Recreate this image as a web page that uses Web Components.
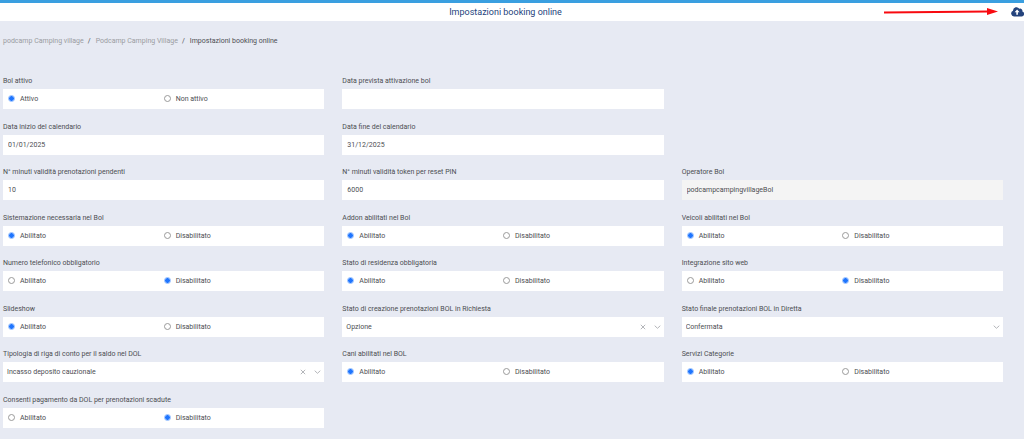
<!DOCTYPE html>
<html lang="it">
<head>
<meta charset="utf-8">
<meta name="viewport" content="width=device-width, initial-scale=1">
<title>Impostazioni booking online</title>
<style>
body {
    margin: 0;
    --page-bg: #e7eaf3;
    --accent: #3a9fe0;
    --brand: #24437c;
    --text-color: #4c4e52;
    --muted: #9a9ca1;
    background: var(--page-bg);
    color: var(--text-color);
    font-family: Roboto, "Liberation Sans", sans-serif;
    font-size: 7px;
}
</style>
</head>
<body>
<settings-page>
    <page-header slot="header" icon-label="Salva">Impostazioni booking online</page-header>
    <bread-crumb slot="path"></bread-crumb>
    <radio-field label="Bol attivo" on="Attivo" off="Non attivo" value="on"></radio-field>
    <text-field label="Data prevista attivazione bol"></text-field>
    <text-field label="Data inizio del calendario" value="01/01/2025" class="row-start"></text-field>
    <text-field label="Data fine del calendario" value="31/12/2025"></text-field>
    <text-field label="N° minuti validità prenotazioni pendenti" value="10" class="row-start"></text-field>
    <text-field label="N° minuti validità token per reset PIN" value="6000"></text-field>
    <text-field label="Operatore Bol" value="podcampcampingvillageBol" readonly></text-field>
    <radio-field label="Sistemazione necessaria nel Bol" value="on"></radio-field>
    <radio-field label="Addon abilitati nel Bol" value="on"></radio-field>
    <radio-field label="Veicoli abilitati nel Bol" value="on"></radio-field>
    <radio-field label="Numero telefonico obbligatorio" value="off"></radio-field>
    <radio-field label="Stato di residenza obbligatoria" value="on"></radio-field>
    <radio-field label="Integrazione sito web" value="off"></radio-field>
    <radio-field label="Slideshow" value="on"></radio-field>
    <select-field label="Stato di creazione prenotazioni BOL in Richiesta" value="Opzione" clearable></select-field>
    <select-field label="Stato finale prenotazioni BOL in Diretta" value="Confermata"></select-field>
    <select-field label="Tipologia di riga di conto per il saldo nel DOL" value="Incasso deposito cauzionale" clearable></select-field>
    <radio-field label="Cani abilitati nel BOL" value="on"></radio-field>
    <radio-field label="Servizi Categorie" value="on"></radio-field>
    <radio-field label="Consenti pagamento da DOL per prenotazioni scadute" value="off"></radio-field>
</settings-page>

<script>
const settingsPageTemplate = document.createElement('template');
settingsPageTemplate.innerHTML = `
<style>
:host {
    display: flex;
    flex-direction: column;
    min-height: 100vh;
}
form {
    flex: 1;
    display: grid;
    grid-template-columns: repeat(3, minmax(0, 1fr));
    column-gap: 18px;
    align-content: space-between;
    padding: 24px 21px 11px 3px;
}
/* the first two rows leave the third column empty */
::slotted(.row-start) {
    grid-column: 1;
}
</style>
<slot name="header"></slot>
<slot name="path"></slot>
<form><slot></slot></form>
`;

class SettingsPage extends HTMLElement {
    constructor() {
        super();
        this.attachShadow({ mode: 'open' });
        this.shadowRoot.appendChild(settingsPageTemplate.content.cloneNode(true));
    }
}

const pageHeaderTemplate = document.createElement('template');
pageHeaderTemplate.innerHTML = `
<style>
:host {
    display: block;
    position: relative;
    background: white;
    border-top: 3px solid var(--accent);
}
header {
    display: flex;
    align-items: center;
    height: 18px;
}
h1 {
    flex: 1;
    margin: 0;
    font-size: 9px;
    line-height: 18px;
    font-weight: 400;
    text-align: center;
    color: var(--brand);
}
button {
    display: flex;
    width: 13px;
    padding: 0 0 2px;
    border: 0;
    background: none;
    color: var(--brand);
    cursor: pointer;
}
.arrow {
    position: absolute;
    top: 4px;
    right: 26px;
    pointer-events: none;
}
</style>
<header>
    <h1><slot></slot></h1>
    <button type="button">
        <svg width="13" height="11" viewBox="0 0 13 11" aria-hidden="true">
            <path fill="currentColor" d="M3 10.4a2.9 2.9 0 0 1-1-5.6v-.3a3.4 3.4 0 0 1 6.3-1.7 2.2 2.2 0 0 1 3 2.7 2.5 2.5 0 0 1-.6 4.9z"/>
            <path fill="white" d="M6.1 3.6 3.6 6.2h1.7v2.6h1.6V6.2h1.7z"/>
        </svg>
    </button>
</header>
<svg class="arrow" width="114" height="10" viewBox="0 0 114 10" aria-hidden="true">
    <path stroke="#f80a10" stroke-width="2" d="M0 5.5 104 4.5"/>
    <path fill="#f80a10" d="M103 1v7l11-3.5z"/>
</svg>
`;

class PageHeader extends HTMLElement {
    constructor() {
        super();
        this.attachShadow({ mode: 'open' });
        this.shadowRoot.appendChild(pageHeaderTemplate.content.cloneNode(true));
        this.shadowRoot.querySelector('button').setAttribute('aria-label', this.getAttribute('icon-label') || '');
    }
}

const breadCrumbTemplate = document.createElement('template');
breadCrumbTemplate.innerHTML = `
<style>
:host {
    display: block;
    padding: 13px 3px 1px;
}
ol {
    display: flex;
    margin: 0;
    padding: 0;
    list-style: none;
    line-height: 14px;
}
li + li::before {
    content: "/";
    padding: 0 5px 0 4px;
    color: var(--text-color);
}
a {
    color: var(--muted);
    text-decoration: none;
}
</style>
<nav>
    <ol>
        <li><a href="#">podcamp Camping village</a></li>
        <li><a href="#">Podcamp Camping Village</a></li>
        <li>Impostazioni booking online</li>
    </ol>
</nav>
`;

class BreadCrumb extends HTMLElement {
    constructor() {
        super();
        this.attachShadow({ mode: 'open' });
        this.shadowRoot.appendChild(breadCrumbTemplate.content.cloneNode(true));
    }
}

// shared by the three kinds of field
const fieldStyle = `
:host {
    display: block;
    min-width: 0;
}
label, legend {
    display: block;
    padding: 0;
    line-height: 16px;
    white-space: nowrap;
}
.box {
    box-sizing: border-box;
    width: 100%;
    height: 20px;
    background: white;
}
input, select {
    font: inherit;
    color: inherit;
}
`;

class TextField extends HTMLElement {
    constructor() {
        super();
        this.attachShadow({ mode: 'open' });
        this.shadowRoot.innerHTML = `
<style>
${fieldStyle}
input {
    display: block;
    padding: 0 5px;
    border: 0;
    border-radius: 0;
}
input:read-only {
    background: #f4f4f4;
}
</style>
<label for="field"></label>
<input class="box" id="field" type="text">
`;
        this.shadowRoot.querySelector('label').textContent = this.getAttribute('label');
        const input = this.shadowRoot.querySelector('input');
        input.value = this.getAttribute('value') || '';
        input.readOnly = this.hasAttribute('readonly');
    }
}

class RadioField extends HTMLElement {
    constructor() {
        super();
        this.attachShadow({ mode: 'open' });
        this.shadowRoot.innerHTML = `
<style>
${fieldStyle}
fieldset {
    min-width: 0;
    margin: 0;
    padding: 0;
    border: 0;
}
.box {
    display: grid;
    grid-template-columns: 1fr 1fr;
    padding: 0 5px;
}
label {
    display: flex;
    align-items: center;
    gap: 5px;
    line-height: 20px;
}
input {
    appearance: none;
    box-sizing: border-box;
    width: 7px;
    height: 7px;
    margin: 0 0 1px;
    border: 1px solid #9a9a9a;
    border-radius: 50%;
    background: white;
}
input:checked {
    border-color: #8dbaff;
    background: radial-gradient(circle, #1f75fe 2px, #cfe1ff 3px);
}
</style>
<fieldset>
    <legend></legend>
    <div class="box">
        <label><input type="radio" name="choice" value="on"><span></span></label>
        <label><input type="radio" name="choice" value="off"><span></span></label>
    </div>
</fieldset>
`;
        this.shadowRoot.querySelector('legend').textContent = this.getAttribute('label');
        const [on, off] = this.shadowRoot.querySelectorAll('span');
        on.textContent = this.getAttribute('on') || 'Abilitato';
        off.textContent = this.getAttribute('off') || 'Disabilitato';
        this.shadowRoot.querySelector(`input[value="${this.getAttribute('value')}"]`).checked = true;
    }
}

class SelectField extends HTMLElement {
    constructor() {
        super();
        this.attachShadow({ mode: 'open' });
        this.shadowRoot.innerHTML = `
<style>
${fieldStyle}
.box {
    display: grid;
    grid-template-columns: 1fr auto auto;
    align-items: center;
    column-gap: 8px;
    padding-right: 3px;
}
select {
    grid-area: 1 / 1 / 2 / -1;
    height: 20px;
    padding: 0 4px;
    border: 0;
    appearance: none;
    background: none;
}
button {
    grid-area: 1 / 2;
    display: flex;
    padding: 0;
    border: 0;
    background: none;
    cursor: pointer;
}
button[hidden] {
    display: none;
}
.chevron {
    grid-area: 1 / 3;
    pointer-events: none;
}
svg {
    fill: none;
    stroke: #b4b6ba;
}
</style>
<label for="field"></label>
<div class="box">
    <select id="field"><option></option></select>
    <button type="button" aria-label="Cancella">
        <svg width="6" height="6" viewBox="0 0 6 6"><path d="m.8.8 4.4 4.4m0-4.4L.8 5.2"/></svg>
    </button>
    <svg class="chevron" width="7" height="6" viewBox="0 0 7 6" aria-hidden="true"><path d="m.7 1.7 2.8 2.6 2.8-2.6"/></svg>
</div>
`;
        this.shadowRoot.querySelector('label').textContent = this.getAttribute('label');
        this.shadowRoot.querySelector('option').textContent = this.getAttribute('value');
        const select = this.shadowRoot.querySelector('select');
        const clear = this.shadowRoot.querySelector('button');
        clear.hidden = !this.hasAttribute('clearable');
        clear.addEventListener('click', () => {
            select.selectedIndex = -1;
        });
    }
}

customElements.define('settings-page', SettingsPage);
customElements.define('page-header', PageHeader);
customElements.define('bread-crumb', BreadCrumb);
customElements.define('text-field', TextField);
customElements.define('radio-field', RadioField);
customElements.define('select-field', SelectField);
</script>
</body>
</html>
